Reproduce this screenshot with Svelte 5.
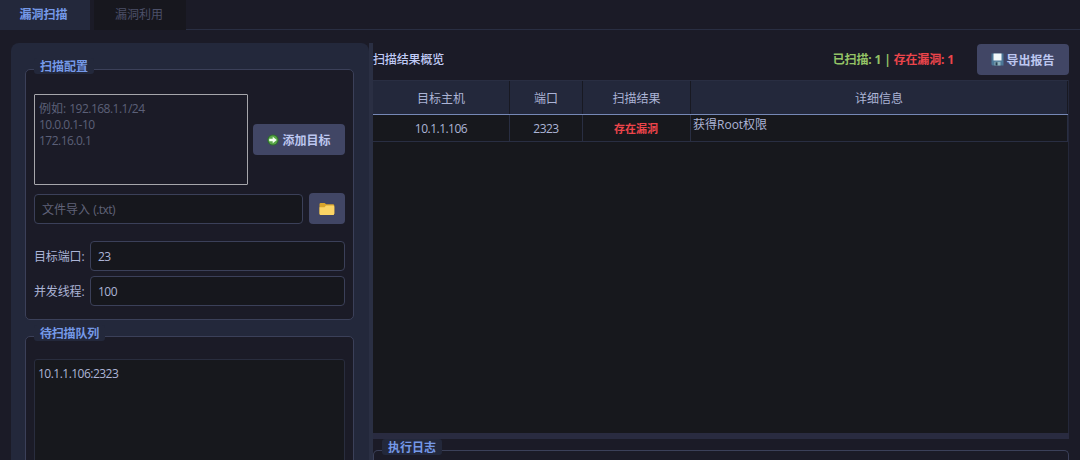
<script>
  const columns = ['目标主机', '端口', '扫描结果', '详细信息'];
</script>

<div class="app">
  <nav class="tabs">
    <div class="tab active">漏洞扫描</div>
    <div class="tab">漏洞利用</div>
    <div class="tabline"></div>
  </nav>
  <div class="body">
    <aside class="side">
      <section class="group config">
        <h2>扫描配置</h2>
        <div class="row targets">
          <div class="area">例如: <span class="n">192.168.1.1/24</span><br /><span class="n">10.0.0.1-10</span><br /><span class="n">172.16.0.1</span></div>
          <button class="btn add">
            <svg width="12" height="12" viewBox="0 0 12 12"><circle cx="6" cy="6" r="5.6" fill="#2f6e2e" /><circle cx="6" cy="6" r="4.6" fill="#58a648" /><path d="M2.2 4.8h3.5V2.7L9.8 6 5.7 9.3V7.2H2.2z" fill="#f2fff0" /></svg>
            <span>添加目标</span>
          </button>
        </div>
        <div class="row file">
          <div class="input hint">文件导入 <span class="n">(.txt)</span></div>
          <button class="btn browse" aria-label="浏览">
            <svg width="16" height="14" viewBox="0 0 16 14"><path d="M.5 2.2Q.5 1 1.7 1h3.9l1.6 1.2h6.6q1.5 0 1.5 1.3v8q0 1.5-1.5 1.5H2Q.5 13 .5 11.5z" fill="#d9a52c" /><path d="M.5 5.2h5l1.5-1.8h6.8q1.5 0 1.5 1.3v6.8q0 1.5-1.5 1.5H2Q.5 13 .5 11.5z" fill="#fbd465" /></svg>
          </button>
        </div>
        <div class="row port"><span class="label">目标端口:</span><div class="input n">23</div></div>
        <div class="row thread"><span class="label">并发线程:</span><div class="input n">100</div></div>
      </section>
      <section class="group queue">
        <h2>待扫描队列</h2>
        <div class="list n">10.1.1.106:2323</div>
      </section>
    </aside>
    <div class="splitter"></div>
    <main>
      <header>
        <span class="title">扫描结果概览</span>
        <span class="stats"><span class="ok">已扫描: 1 |</span> <span class="bad">存在漏洞: 1</span></span>
        <button class="btn export">
          <svg width="13" height="13" viewBox="0 0 13 13"><path d="M.5.5h12v12h-11l-1-1z" fill="#4c7797" /><path d="M2.5.5h8v7h-8z" fill="#f3f8fa" /><path d="M3.5 8.8h6v3.7h-6z" fill="#8fb3bd" /><path d="M4.5 9.3h2v3.2h-2z" fill="#263d50" /></svg>
          <span>导出报告</span>
        </button>
      </header>
      <div class="table">
        <div class="tr head">
          {#each columns as c}<div>{c}</div>{/each}
        </div>
        <div class="tr data">
          <div class="n">10.1.1.106</div>
          <div class="n">2323</div>
          <div class="vuln">存在漏洞</div>
          <div class="detail">获得Root权限</div>
        </div>
      </div>
      <div class="hsplit"></div>
      <section class="group log"><h2>执行日志</h2></section>
    </main>
  </div>
</div>

<style>
  :global(body) { background: #1b1b27; overflow: hidden; }
  * { box-sizing: border-box; }
  .app { width: 1080px; height: 460px; overflow: hidden; display: flex; flex-direction: column; background: #1b1b27; color: #acb4d6; font: 12px/16px "Open Sans", "Noto Sans CJK SC", sans-serif; }
  .n { letter-spacing: -0.52px; }
  .tabs { height: 30px; display: flex; flex: none; }
  .tab { width: 93px; padding: 7px 2px 0 0; text-align: center; background: #17171e; color: #4c5069; border-left: 1px solid #1b1b27; }
  .tab.active { width: 90px; margin-right: 3px; padding-right: 3px; background: #23283b; color: #7599e8; font-weight: 700; border: 0; }
  .tabline { flex: 1; border-bottom: 1px solid #292e42; }
  .body { display: flex; flex: 1; min-height: 0; padding: 13px 11px 0 11px; }
  .side { width: 358px; flex: none; background: #23283b; border-radius: 8px 8px 0 0; padding: 26px 15px 0 14px; overflow: hidden; }
  .splitter { width: 4px; background: #2a2f43; flex: none; }
  .group { border: 1px solid #3b4059; border-radius: 5px; background: #1b1b27; }
  h2 { width: fit-content; height: 16px; margin: -12px 0 0 8px; padding: 0 6px; background: #23283b; border-radius: 3px; color: #7599e8; font-size: 12px; line-height: 18px; font-weight: 700; }
  .config { height: 251px; padding: 0 8px; }
  .config h2, .queue h2 { margin-left: 0; }
  .queue h2 { letter-spacing: -0.2px; }
  .row { display: flex; align-items: center; }
  .targets { margin-top: 20px; gap: 5px; }
  .area { width: 214px; height: 91px; border: 1px solid #a6a6ab; border-radius: 1px; padding: 6px 4px; color: #5c6078; }
  .btn { display: flex; align-items: center; justify-content: center; border: 0; border-radius: 4px; padding: 0; background: #414665; color: #bdc7f0; font: 700 12px/16px "Open Sans", "Noto Sans CJK SC", sans-serif; }
  .btn span { padding-top: 2px; }
  .add { flex: 1; height: 31px; gap: 3px; }
  .file { margin-top: 8px; gap: 6px; }
  .input { flex: 1; height: 30px; border: 1px solid #3b4059; border-radius: 4px; background: #16171d; padding: 7px 7px; }
  .hint { color: #606379; }
  .browse { width: 36px; height: 31px; }
  .port { margin-top: 17px; }
  .thread { margin-top: 5px; }
  .label { width: 56px; padding-top: 2px; white-space: nowrap; letter-spacing: -0.15px; }
  .queue { margin-top: 16px; height: 140px; padding: 0 8px; }
  .list { margin-top: 18px; height: 120px; padding: 6px 3px; background: #17181d; border: 1px solid #292d3e; border-radius: 3px; }
  main { flex: 1; min-width: 0; display: flex; flex-direction: column; }
  header { height: 37px; flex: none; display: flex; align-items: flex-start; }
  .title { margin-top: 9px; font-weight: 500; color: #c0caf5; letter-spacing: -0.15px; }
  .stats { margin: 9px 23px 0 auto; font-weight: 700; white-space: pre; letter-spacing: -0.15px; }
  .ok { color: #94c366; }
  .bad { color: #ed454b; }
  .export { width: 92px; height: 31px; margin-top: 1px; gap: 2px; }
  .table { height: 353px; flex: none; background: #17181d; border-right: 1px solid #24283a; }
  .tr { display: grid; grid-template-columns: 137px 73px 108px 1fr; text-align: center; }
  .tr > div { border-right: 1px solid #292e42; }
  .head { height: 35px; background: #23283b; border-top: 1px solid #292e42; border-bottom: 1px solid #7688b6; line-height: 35px; }
  .head > div { height: 33px; border-right-color: #181922; }
  .data { height: 27px; border-bottom: 1px solid #292e42; line-height: 28px; }
  .data > div { height: 26px; }
  .vuln { font-weight: 700; color: #ed454b; font-size: 11px; padding-right: 1px; }
  .data .detail { text-align: left; line-height: 20px; padding-left: 2px; }
  .hsplit { height: 6px; flex: none; background: #292b40; }
  .log { margin-top: 11px; flex: 1; border-bottom: 0; border-radius: 5px 5px 0 0; }
</style>
